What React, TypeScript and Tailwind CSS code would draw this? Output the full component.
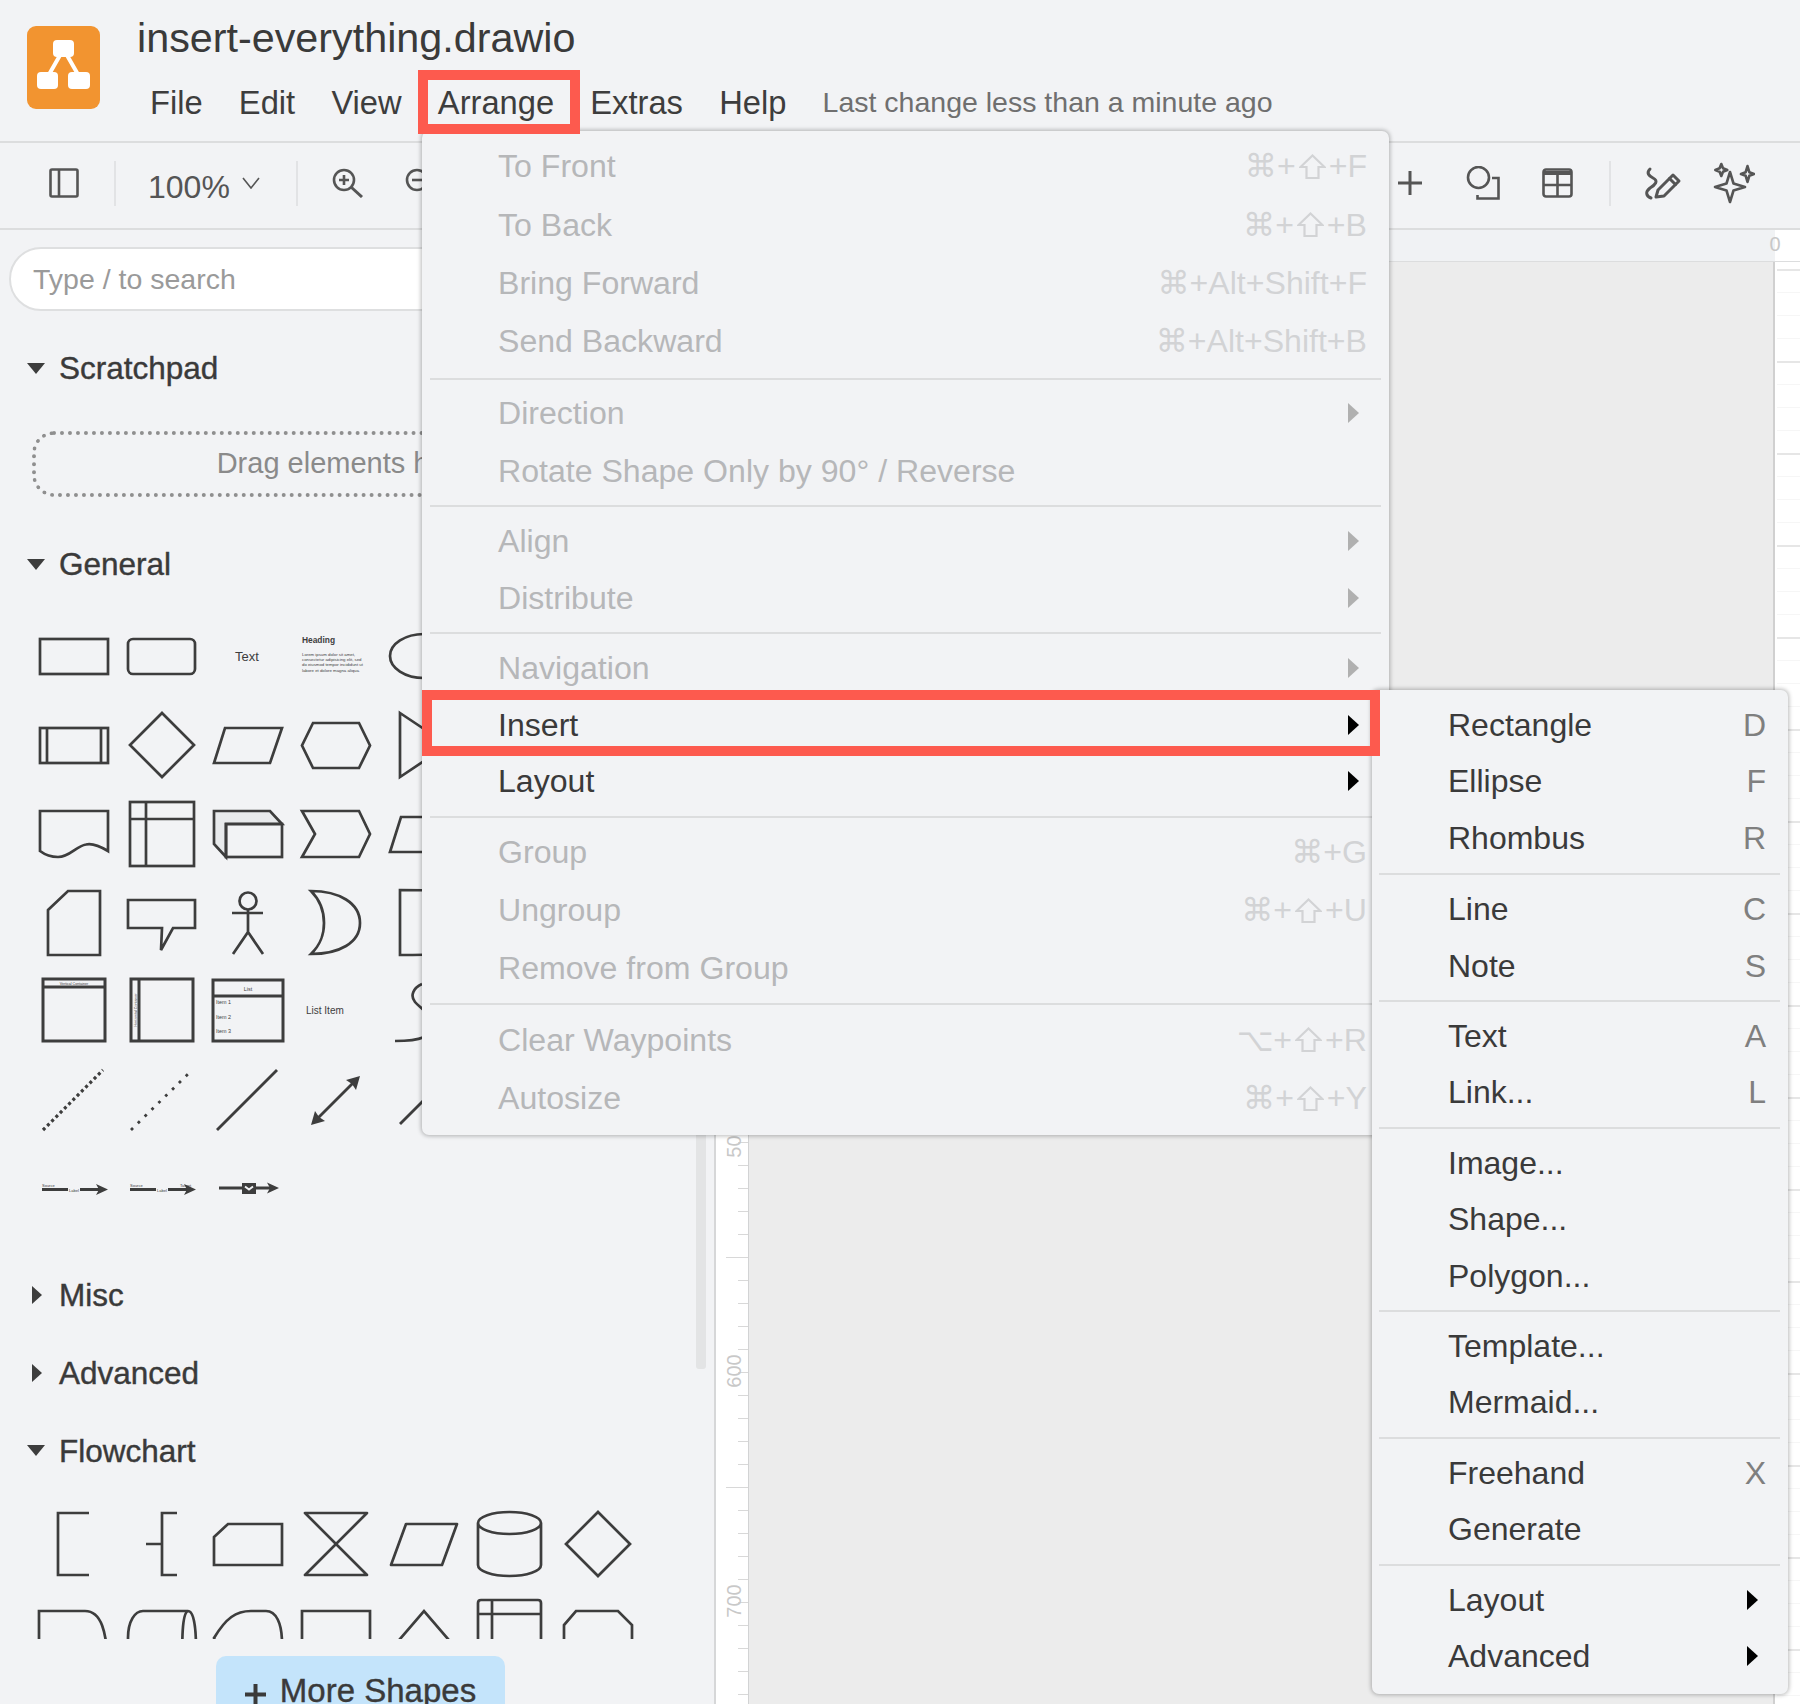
import type { ReactNode } from "react";

const Cell = ({ children }: { children?: ReactNode }) => (
  <svg viewBox="0 0 88 88" className="w-[88px] h-[88px]" fill="none" stroke="#3d3d3d" strokeWidth={2.7}>
    {children}
  </svg>
);

const Label = ({ x, y, size, children, anchor, bold, rotate }: { x: number; y: number; size: number; children: string; anchor?: "middle"; bold?: boolean; rotate?: number }) => (
  <text
    x={x}
    y={y}
    fontSize={size}
    textAnchor={anchor}
    fontWeight={bold ? 700 : 400}
    fill="#3d3d3d"
    stroke="none"
    transform={rotate ? `rotate(${rotate} ${x} ${y})` : undefined}
  >
    {children}
  </text>
);

const generalShapes: ReactNode[] = [
  // row 1
  <rect x="10" y="27" width="68" height="35" />,
  <rect x="10" y="27" width="67" height="35" rx="5" />,
  <Label x={41} y={48.5} size={13} anchor="middle">Text</Label>,
  <>
    <Label x={8} y={31} size={8.4} bold>Heading</Label>
    <Label x={8} y={44} size={4.3}>Lorem ipsum dolor sit amet,</Label>
    <Label x={8} y={49.2} size={4.3}>consectetur adipisicing elit, sed</Label>
    <Label x={8} y={54.4} size={4.3}>do eiusmod tempor incididunt ut</Label>
    <Label x={8} y={59.6} size={4.3}>labore et dolore magna aliqua.</Label>
  </>,
  <ellipse cx="42" cy="44" rx="34" ry="22" />,
  // row 2
  <>
    <rect x="10" y="27" width="68" height="35" />
    <path d="M17 27V62M71 27V62" />
  </>,
  <polygon points="44,12 76,44 44,76 12,44" />,
  <polygon points="19,27 76,27 64,62 8,62" />,
  <polygon points="19,22 65,22 76,44.5 65,67 19,67 8,44.5" />,
  <polygon points="18,12 66,44 18,76" />,
  // row 3
  <path d="M10 22H78V62C68 56 62 54 56 55.5C46 57 40 68 28 68C21 68 14 65 10 62Z" />,
  <>
    <rect x="12" y="13" width="64" height="64" />
    <path d="M28 13V77M12 30H76" />
  </>,
  <>
    <polygon points="8,22 64,22 76,35 20,35 20,68 8,55" fill="#e8eaec" />
    <rect x="20" y="35" width="56" height="33" />
  </>,
  <polygon points="8,22 65,22 76,45 65,68 8,68 21,45" />,
  <polygon points="19,28 70,28 80,63 8,63" />,
  // row 4
  <polygon points="18,32 38,13 70,13 70,77 18,77" />,
  <polygon points="10,22 77,22 77,50 55,50 43,72 44,50 10,50" />,
  <>
    <circle cx="42" cy="23" r="8.5" />
    <path d="M26 35H57M42 31.5V54L27 76M42 54L57 76" />
  </>,
  <path d="M17 13C45 13 66 25 66 45C66 65 45 76 17 76C28 65 30 55 30 45C30 33 26 22 17 13Z" />,
  <path d="M60 13C45 12 30 12 18 12V77C30 77 45 77 60 76" />,
  // row 5
  <>
    <rect x="13" y="13" width="62" height="62" strokeWidth={3} />
    <path d="M13 21H75" strokeWidth={3} />
    <Label x={44} y={18.5} size={3.6} anchor="middle">Vertical Container</Label>
  </>,
  <>
    <rect x="13" y="13" width="62" height="62" strokeWidth={3} />
    <path d="M21 13V75" strokeWidth={3} />
    <Label x={18.5} y={44} size={3.6} anchor="middle" rotate={-90}>Horizontal Container</Label>
  </>,
  <>
    <rect x="7" y="14" width="70" height="61" strokeWidth={3} />
    <path d="M7 30H77" strokeWidth={3} />
    <Label x={42} y={25} size={5.4} anchor="middle">List</Label>
    <Label x={10} y={38} size={5.4}>Item 1</Label>
    <Label x={10} y={53} size={5.4}>Item 2</Label>
    <Label x={10} y={67} size={5.4}>Item 3</Label>
  </>,
  <Label x={12} y={48} size={10}>List Item</Label>,
  <path d="M40 18C31 22 28 30 33 36C38 42 50 48 50 60C50 70 40 75 13 75" />,
  // row 6
  <path d="M13 75L73 15" strokeWidth={3.2} strokeDasharray="3 3" />,
  <path d="M13 75L70 19" strokeWidth={2.8} strokeDasharray="2.8 6.8" />,
  <path d="M11 75L71 15" strokeWidth={2.8} />,
  <>
    <path d="M24 63L59 28" strokeWidth={2.8} />
    <polygon points="66,21 62,35 58,29 52,25" fill="#3d3d3d" stroke="none" />
    <polygon points="17,70 21,56 25,62 31,66" fill="#3d3d3d" stroke="none" />
  </>,
  <path d="M18 69L62 25" strokeWidth={2.8} />,
  // row 7
  <>
    <path d="M12 46.5H70" strokeWidth={3} />
    <polygon points="78,46.5 66,41 69,46.5 66,52" fill="#3d3d3d" stroke="none" />
    <Label x={12} y={44} size={4}>Source</Label>
    <rect x="38" y="44" width="12" height="6" fill="#f2f3f5" stroke="none" />
    <Label x={44} y={49} size={4} anchor="middle">Label</Label>
  </>,
  <>
    <path d="M12 46.5H70" strokeWidth={3} />
    <polygon points="78,46.5 66,41 69,46.5 66,52" fill="#3d3d3d" stroke="none" />
    <Label x={12} y={44} size={4}>Source</Label>
    <rect x="38" y="44" width="12" height="6" fill="#f2f3f5" stroke="none" />
    <Label x={44} y={49} size={4} anchor="middle">Label</Label>
    <Label x={62} y={44} size={4}>Target</Label>
  </>,
  <>
    <path d="M13 45H64" strokeWidth={3} />
    <polygon points="73,45 61,39.5 64,45 61,50.5" fill="#3d3d3d" stroke="none" />
    <rect x="36" y="40" width="14" height="11" fill="#3d3d3d" stroke="none" />
    <path d="M39 43.5L43 46.5L47 43.5" stroke="#f2f3f5" strokeWidth={2} />
  </>,
];

const flowShapes: ReactNode[] = [
  <path d="M59 13H28V75H59" />,
  <path d="M59 13H44V75H59M44 44H28" />,
  <polygon points="8,37 22,24 76,24 76,65 8,65" />,
  <polygon points="11,13 73,13 11,75 73,75" strokeLinejoin="round" />,
  <polygon points="24,24 75,24 60,65 9,65" strokeLinejoin="round" />,
  <path d="M8 23C8 17 22 12 39.5 12C57 12 71 17 71 23V65C71 71 57 76 39.5 76C22 76 8 71 8 65ZM8 23C8 29 22 34 39.5 34C57 34 71 29 71 23" />,
  <polygon points="40,12 72,44 40,76 8,44" />,
  // second row is cut off by the panel
  <path d="M9 88V23H55C70 23 78 40 78 88" />,
  <path d="M10 88V50C10 33 17 23 25 23H70C75 23 78 35 78 60V88M70 23C64 25 64 50 64 88" />,
  <path d="M22 88L8 50C20 30 30 23 45 23H60C70 23 76 35 76 55V88" />,
  <path d="M8 88V23H76V88" />,
  <path d="M6 65L42 23L78 65" />,
  <path d="M8 88V15Q8 12 11 12H68Q71 12 71 15V88M8 26H71M22 12V88" />,
  <path d="M6 88V37L18 23H60L74 37V88" />,
];

type Item = { label: string; key?: string; sub?: boolean };
type Group = { row: string; sep: string; items: Item[] };

const mainMenu: Group[] = [
  {
    row: "h-[58.4px]",
    sep: "",
    items: [
      { label: "To Front", key: "⌘+⇧+F" },
      { label: "To Back", key: "⌘+⇧+B" },
      { label: "Bring Forward", key: "⌘+Alt+Shift+F" },
      { label: "Send Backward", key: "⌘+Alt+Shift+B" },
    ],
  },
  {
    row: "h-[58px]",
    sep: "mt-[7px] mb-[4px]",
    items: [{ label: "Direction", sub: true }, { label: "Rotate Shape Only by 90° / Reverse" }],
  },
  {
    row: "h-[57px]",
    sep: "mt-[5px] mb-[6px]",
    items: [{ label: "Align", sub: true }, { label: "Distribute", sub: true }],
  },
  {
    row: "h-[56.6px]",
    sep: "mt-[5.6px] mb-[5.4px]",
    items: [{ label: "Navigation", sub: true }, { label: "Insert", sub: true }, { label: "Layout", sub: true }],
  },
  {
    row: "h-[58px]",
    sep: "mt-[6.8px] mb-[5.2px]",
    items: [{ label: "Group", key: "⌘+G" }, { label: "Ungroup", key: "⌘+⇧+U" }, { label: "Remove from Group" }],
  },
  {
    row: "h-[58.5px]",
    sep: "mt-[5.8px] mb-[5.2px]",
    items: [
      { label: "Clear Waypoints", key: "⌥+⇧+R" },
      { label: "Autosize", key: "⌘+⇧+Y" },
    ],
  },
];

const insertMenu: Group[] = [
  {
    row: "h-[56.4px]",
    sep: "",
    items: [
      { label: "Rectangle", key: "D" },
      { label: "Ellipse", key: "F" },
      { label: "Rhombus", key: "R" },
    ],
  },
  {
    row: "h-[56.4px]",
    sep: "mt-[7px] mb-[6px]",
    items: [
      { label: "Line", key: "C" },
      { label: "Note", key: "S" },
    ],
  },
  {
    row: "h-[56.4px]",
    sep: "mt-[6px] mb-[6px]",
    items: [
      { label: "Text", key: "A" },
      { label: "Link...", key: "L" },
    ],
  },
  {
    row: "h-[56.4px]",
    sep: "mt-[6px] mb-[6px]",
    items: [{ label: "Image..." }, { label: "Shape..." }, { label: "Polygon..." }],
  },
  {
    row: "h-[56.4px]",
    sep: "mt-[6px] mb-[6px]",
    items: [{ label: "Template..." }, { label: "Mermaid..." }],
  },
  {
    row: "h-[56.4px]",
    sep: "mt-[7px] mb-[5px]",
    items: [{ label: "Freehand", key: "X" }, { label: "Generate" }],
  },
  {
    row: "h-[56px]",
    sep: "mt-[7px] mb-[6px]",
    items: [
      { label: "Layout", sub: true },
      { label: "Advanced", sub: true },
    ],
  },
];

const Arrow = ({ fill }: { fill: string }) => (
  <svg viewBox="0 0 11 20" className="w-[11px] h-[20px]" fill={fill}>
    <polygon points="0,0 11,10 0,20" />
  </svg>
);

// shortcut text, the shift key is drawn because the font's glyph is too narrow
const Shortcut = ({ text }: { text: string }) => {
  const [before, after] = text.split("⇧");
  return (
    <span className="ml-auto flex items-center text-[#d2d3d5]">
      <span>{before}</span>
      {after !== undefined && (
        <>
          <svg viewBox="0 0 27 25" className="w-[27px] h-[25px] mx-[3px]" fill="none" stroke="#d2d3d5" strokeWidth={2.2}>
            <path d="M13.5 1.5L25.5 13H19.5V24H7.5V13H1.5Z" />
          </svg>
          <span>{after}</span>
        </>
      )}
    </span>
  );
};

const SectionHeader = ({ label, open }: { label: string; open: boolean }) => (
  <div className="flex items-center h-[40px] text-[31.5px] text-[#3a3a3a] [-webkit-text-stroke:0.4px_#3a3a3a]">
    <div className="w-[59px] flex justify-start pl-[27px] items-center">
      {open ? (
        <svg viewBox="0 0 18 11" className="w-[18px] h-[11px]" fill="#3d3d3d">
          <polygon points="0,0 18,0 9,11" />
        </svg>
      ) : (
        <svg viewBox="0 0 10 18" className="w-[10px] h-[18px] ml-[5px]" fill="#3d3d3d">
          <polygon points="0,0 10,9 0,18" />
        </svg>
      )}
    </div>
    <span className="mt-[2px]">{label}</span>
  </div>
);

const ZoomIcon = ({ plus }: { plus?: boolean }) => (
  <svg viewBox="0 0 32 30" className="w-[32px] h-[30px]" fill="none" stroke="#555" strokeWidth={2.6}>
    <circle cx="12" cy="12" r="10" />
    <path d="M19 19L30 29" strokeWidth={3} />
    <path d={plus ? "M7 12H17M12 7V17" : "M7 12H17"} />
  </svg>
);

const ticks = Array.from({ length: 60 }, (_, i) => i);

export default function App() {
  return (
    <div className="relative w-[1800px] h-[1704px] overflow-hidden bg-[#f2f3f5] font-['Liberation_Sans','DejaVu_Sans',sans-serif] text-[#3d3d3d]">
      {/* header */}
      <div className="flex h-[143px] border-b-2 border-[#dcddde]">
        <svg viewBox="0 0 73 83" className="w-[73px] h-[83px] ml-[27px] mt-[26px]">
          <rect width="73" height="83" rx="9" fill="#f29430" />
          <path d="M36 24L20 52M37 24L53 52" stroke="#fff" strokeWidth="4" />
          <rect x="26" y="14" width="21" height="17" rx="4" fill="#fff" />
          <rect x="10" y="46" width="21" height="17" rx="4" fill="#fff" />
          <rect x="41" y="46" width="22" height="17" rx="4" fill="#fff" />
        </svg>
        <div className="ml-[37px] flex flex-col">
          <div className="h-[76px] leading-[76px] text-[41.3px] text-[#3a3a3a]">insert-everything.drawio</div>
          <div className="flex items-center gap-[36.2px] ml-[13px] h-[54px] text-[32.7px]">
            <span>File</span>
            <span>Edit</span>
            <span>View</span>
            <span>Arrange</span>
            <span>Extras</span>
            <span>Help</span>
            <span className="text-[28.5px] text-[#6f6f6f] -mt-[2px]">Last change less than a minute ago</span>
          </div>
        </div>
      </div>

      {/* toolbar */}
      <div className="flex items-center h-[87px] border-b-2 border-[#dcddde] pl-[49px] pb-[5px]">
        <svg viewBox="0 0 30 30" className="w-[30px] h-[30px]" fill="none" stroke="#555" strokeWidth={2.6}>
          <rect x="1.5" y="1.5" width="27" height="27" rx="1.5" />
          <path d="M10 1.5V28.5" />
        </svg>
        <div className="w-[2px] h-[45px] bg-[#e2e3e5] ml-[35px]" />
        <span className="ml-[32px] mt-[7px] text-[32px] text-[#555]">100%</span>
        <svg viewBox="0 0 18 12" className="w-[18px] h-[12px] ml-[12px]" fill="none" stroke="#555" strokeWidth={1.6}>
          <path d="M1 1L9 11L17 1" />
        </svg>
        <div className="w-[2px] h-[45px] bg-[#e2e3e5] ml-[36px]" />
        <div className="ml-[34px] flex gap-[41px]">
          <ZoomIcon plus />
          <ZoomIcon />
        </div>
        <div className="ml-auto flex items-center pr-[45px]">
          <svg viewBox="0 0 24 24" className="w-[24px] h-[24px]" fill="none" stroke="#555" strokeWidth={3}>
            <path d="M0 12H24M12 0V24" />
          </svg>
          <svg viewBox="0 0 34 34" className="w-[34px] h-[34px] ml-[44px]" fill="none" stroke="#555" strokeWidth={2.6}>
            <circle cx="12.5" cy="11.5" r="10.5" />
            <path d="M26 12H32.5V32.5H11.5V29" />
          </svg>
          <svg viewBox="0 0 31 30" className="w-[31px] h-[30px] ml-[42px]" fill="none" stroke="#555" strokeWidth={2.6}>
            <rect x="1.5" y="1.5" width="28" height="27" rx="2.5" />
            <path d="M1.5 5H29.5" strokeWidth={4} />
            <path d="M1.5 17H29.5M15.5 7V28" />
          </svg>
          <div className="w-[2px] h-[45px] bg-[#e2e3e5] ml-[36px]" />
          <svg viewBox="0 0 42 38" className="w-[42px] h-[38px] ml-[30px]" fill="none" stroke="#555" strokeWidth={3} strokeLinecap="round" strokeLinejoin="round">
            <path d="M9 5C5 9 8 12 12 14C18 17 14 21 9 24C4 28 5 32 10 34" />
            <path d="M15 33L17 26L32 11L38 17L23 32Z" />
            <path d="M28.5 14.5L34.5 20.5" />
          </svg>
          <svg viewBox="0 0 42 42" className="w-[42px] h-[42px] ml-[30px]" fill="none" stroke="#555" strokeWidth={2.6} strokeLinejoin="round">
            <path d="M17 10L20.5 21.5L32 25L20.5 28.5L17 40L13.5 28.5L2 25L13.5 21.5Z" />
            <path d="M8.3 2L10 6.3L14.3 8L10 9.7L8.3 14L6.6 9.7L2.3 8L6.6 6.3Z" />
            <path d="M34.5 4L36.3 10.2L41 12L36.3 13.8L34.5 20L32.7 13.8L28 12L32.7 10.2Z" />
          </svg>
        </div>
      </div>

      <div className="flex h-[1474px]">
        {/* sidebar */}
        <div className="relative w-[716px] border-r-2 border-[#d6d7d8] overflow-hidden">
          <div className="ml-[9px] mt-[17px] h-[64px] w-[600px] rounded-full bg-white border-2 border-[#dedfe0] flex items-center pl-[22px] pt-[1px] text-[28.5px] text-[#9a9a9a]">
            Type / to search
          </div>
          <div className="mt-[37px]">
            <SectionHeader label="Scratchpad" open />
          </div>
          <div className="ml-[32px] mt-[43px] h-[66px] w-[624px] rounded-[22px] border-[4px] border-dotted border-[#8f8f8f] flex items-center justify-center text-[29px] text-[#8a8a8a]">
            Drag elements here
          </div>
          <div className="mt-[47px]">
            <SectionHeader label="General" open />
          </div>
          <div className="mt-[28px] pl-[30px] grid grid-cols-[repeat(5,88px)] auto-rows-[88.5px]">
            {generalShapes.map((shape, i) => (
              <Cell key={i}>{shape}</Cell>
            ))}
          </div>
          <div className="mt-[43px]">
            <SectionHeader label="Misc" open={false} />
          </div>
          <div className="mt-[38px]">
            <SectionHeader label="Advanced" open={false} />
          </div>
          <div className="mt-[38px]">
            <SectionHeader label="Flowchart" open />
          </div>
          <div className="mt-[29px] pl-[30px] h-[139px] overflow-hidden grid grid-cols-[repeat(7,88px)] auto-rows-[88.5px]">
            {flowShapes.map((shape, i) => (
              <Cell key={i}>{shape}</Cell>
            ))}
          </div>
          <div className="ml-[216px] mt-[17px] w-[289px] h-[70px] rounded-t-[10px] bg-[#c4e4fb] flex justify-center gap-[14px] pt-[10px] text-[33px] text-[#3a3a3a] [-webkit-text-stroke:0.4px_#3a3a3a]">
            <svg viewBox="0 0 21 21" className="w-[21px] h-[21px] mt-[18px]" stroke="#3a3a3a" strokeWidth={4}>
              <path d="M0 10.5H21M10.5 0V21" />
            </svg>
            More Shapes
          </div>
          {/* scrollbar */}
          <div className="absolute left-[696px] top-0 w-[10px] h-[1139px] bg-[#e3e4e5] rounded-b-[3px]" />
        </div>

        {/* left ruler */}
        <div className="relative w-[33px] bg-white border-r border-[#d2d3d4]">
          {ticks.map((i) => (
            <div
              key={i}
              className={i % 10 === 0 ? "absolute right-0 h-[1px] w-[22px] bg-[#d8d8d8]" : "absolute right-0 h-[1px] w-[10px] bg-[#d8d8d8]"}
              style={{ top: 107 + i * 23 }}
            />
          ))}
          <span className="absolute left-[-4px] top-[901px] w-[44px] text-center -rotate-90 text-[20px] leading-[20px] text-[#c8c8c8]">500</span>
          <span className="absolute left-[-4px] top-[1131px] w-[44px] text-center -rotate-90 text-[20px] leading-[20px] text-[#c8c8c8]">600</span>
          <span className="absolute left-[-4px] top-[1361px] w-[44px] text-center -rotate-90 text-[20px] leading-[20px] text-[#c8c8c8]">700</span>
        </div>

        {/* canvas */}
        <div className="flex-1 flex flex-col">
          <div className="h-[32px] flex border-b border-[#dcddde]">
            <div className="flex-1 bg-[#f0f2f4]" />
            <div className="relative w-[25px] bg-white">
              <span className="absolute -left-[9px] top-[4px] w-[18px] text-center text-[20px] leading-[20px] text-[#c8c8c8]">0</span>
            </div>
          </div>
          <div className="flex-1 flex">
            <div className="flex-1 bg-[#ececec] border-r-[2px] border-[#d0d0d0]" />
            <div className="w-[25px] bg-white pl-[2px] pt-[7px]">
              <div className="h-full bg-[linear-gradient(#e6e6e6_2px,transparent_2px),linear-gradient(#f6f6f6_1px,transparent_1px)] bg-size-[100%_92px,100%_23px]" />
            </div>
          </div>
        </div>
      </div>

      {/* Arrange menu */}
      <div className="absolute left-[422px] top-[131px] w-[967px] h-[1004px] rounded-[7px] bg-[#f2f3f5] shadow-[0_0_4px_1px_rgba(0,0,0,0.28)] pt-[6.2px] text-[32.1px]">
        {mainMenu.map((group, g) => (
          <div key={g}>
            {g > 0 && <div className={`${group.sep} mx-[8px] h-[2px] bg-[#dcddde]`} />}
            {group.items.map((item) => {
              const active = item.label === "Insert" || item.label === "Layout";
              return (
                <div key={item.label} className={`${group.row} flex items-center pl-[76px] pr-[22px]`}>
                  <span className={active ? "text-[#3a3a3a]" : "text-[#b6b7b9]"}>{item.label}</span>
                  {item.key && <Shortcut text={item.key} />}
                  {item.sub && (
                    <span className="ml-auto mr-[8px]">
                      <Arrow fill={active ? "#000" : "#b0b0b0"} />
                    </span>
                  )}
                </div>
              );
            })}
          </div>
        ))}
      </div>

      {/* Insert submenu */}
      <div className="absolute left-[1372px] top-[690px] w-[416px] h-[1004px] rounded-[7px] bg-[#f2f3f5] shadow-[0_0_4px_1px_rgba(0,0,0,0.28)] pt-[6.8px] text-[32px]">
        {insertMenu.map((group, g) => (
          <div key={g}>
            {g > 0 && <div className={`${group.sep} ml-[7px] mr-[8px] h-[2px] bg-[#dcddde]`} />}
            {group.items.map((item) => (
              <div key={item.label} className={`${group.row} flex items-center pl-[76px] pr-[22px]`}>
                <span className="text-[#3a3a3a]">{item.label}</span>
                {item.key && <span className="ml-auto text-[#7f7f7f]">{item.key}</span>}
                {item.sub && (
                  <span className="ml-auto mr-[8px]">
                    <Arrow fill="#000" />
                  </span>
                )}
              </div>
            ))}
          </div>
        ))}
      </div>

      {/* red highlights */}
      <div className="absolute left-[418px] top-[70px] w-[162px] h-[64px] border-[10px] border-[#fd5a4e]" />
      <div className="absolute left-[422px] top-[690px] w-[958px] h-[66px] border-[10px] border-[#fd5a4e]" />
    </div>
  );
}
